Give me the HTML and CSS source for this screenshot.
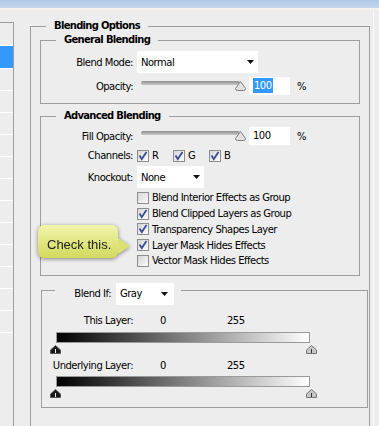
FILE: index.html
```html
<!DOCTYPE html>
<html lang="en">
<head>
    <meta charset="UTF-8" />
    <title>Layer Style - Blending Options</title>
    <link rel="stylesheet" href="styles.css">
</head>
<body>

<div class="titlebar"></div>

<div class="window">
    <div class="sidebar">
        <div class="side-row first"></div>
        <div class="side-row selected"></div>
        <div class="side-row"></div>
        <div class="side-row"></div>
        <div class="side-row"></div>
        <div class="side-row"></div>
        <div class="side-row"></div>
        <div class="side-row"></div>
        <div class="side-row"></div>
        <div class="side-row"></div>
        <div class="side-row"></div>
        <div class="side-row"></div>
        <div class="side-row"></div>
        <div class="side-row"></div>
    </div>

    <div class="main">
        <fieldset class="group outer">
            <legend>Blending Options</legend>

            <fieldset class="group general">
                <legend>General Blending</legend>
                <div class="row row-select">
                    <span class="lbl">Blend Mode:</span>
                    <div class="select select-wide">
                        <span>Normal</span>
                        <svg class="arrow" width="7" height="4" viewBox="0 0 7 4"><polygon points="0,0 7,0 3.5,4" /></svg>
                    </div>
                </div>
                <div class="row row-num">
                    <span class="lbl">Opacity:</span>
                    <div class="slider">
                        <div class="track"></div>
                        <svg class="thumb" width="11" height="11" viewBox="0 0 11 11"><path d="M5.5 0.5 L10.5 7.5 Q10.5 9.5 8.5 9.5 H2.5 Q0.5 9.5 0.5 7.5 Z" /></svg>
                    </div>
                    <div class="num"><span class="hl">100</span></div>
                    <span class="pct">%</span>
                </div>
            </fieldset>

            <fieldset class="group advanced">
                <legend>Advanced Blending</legend>
                <div class="row row-num">
                    <span class="lbl">Fill Opacity:</span>
                    <div class="slider">
                        <div class="track"></div>
                        <svg class="thumb" width="11" height="11" viewBox="0 0 11 11"><path d="M5.5 0.5 L10.5 7.5 Q10.5 9.5 8.5 9.5 H2.5 Q0.5 9.5 0.5 7.5 Z" /></svg>
                    </div>
                    <div class="num">100</div>
                    <span class="pct">%</span>
                </div>
                <div class="row row-channels">
                    <span class="lbl">Channels:</span>
                    <span class="ch"><span class="cb on"><svg width="10" height="10" viewBox="0 0 10 10"><path d="M1.5 4.5 L3.8 8 L8.5 1" /></svg></span>R</span>
                    <span class="ch"><span class="cb on"><svg width="10" height="10" viewBox="0 0 10 10"><path d="M1.5 4.5 L3.8 8 L8.5 1" /></svg></span>G</span>
                    <span class="ch"><span class="cb on"><svg width="10" height="10" viewBox="0 0 10 10"><path d="M1.5 4.5 L3.8 8 L8.5 1" /></svg></span>B</span>
                </div>
                <div class="row row-select">
                    <span class="lbl">Knockout:</span>
                    <div class="select select-knock">
                        <span>None</span>
                        <svg class="arrow" width="7" height="4" viewBox="0 0 7 4"><polygon points="0,0 7,0 3.5,4" /></svg>
                    </div>
                </div>
                <div class="checks">
                    <div class="check-row"><span class="cb"></span>Blend Interior Effects as Group</div>
                    <div class="check-row"><span class="cb on"><svg width="10" height="10" viewBox="0 0 10 10"><path d="M1.5 4.5 L3.8 8 L8.5 1" /></svg></span>Blend Clipped Layers as Group</div>
                    <div class="check-row"><span class="cb on"><svg width="10" height="10" viewBox="0 0 10 10"><path d="M1.5 4.5 L3.8 8 L8.5 1" /></svg></span>Transparency Shapes Layer</div>
                    <div class="check-row"><span class="cb on"><svg width="10" height="10" viewBox="0 0 10 10"><path d="M1.5 4.5 L3.8 8 L8.5 1" /></svg></span>Layer Mask Hides Effects</div>
                    <div class="check-row"><span class="cb"></span>Vector Mask Hides Effects</div>
                </div>
            </fieldset>

            <fieldset class="group blendif">
                <legend>
                    <span class="if-wrap">
                        <span class="if-lbl">Blend If:</span>
                        <span class="select select-gray">
                            <span>Gray</span>
                            <svg class="arrow" width="7" height="4" viewBox="0 0 7 4"><polygon points="0,0 7,0 3.5,4" /></svg>
                        </span>
                    </span>
                </legend>

                <div class="val-row">
                    <span class="val-lbl">This Layer:</span>
                    <span class="val-lo">0</span>
                    <span>255</span>
                </div>
                <div class="bar"></div>
                <div class="stops">
                    <svg class="stop dark" width="11" height="9" viewBox="0 0 11 9"><path d="M0.5 8.5 V5 L5.5 0.5 L10.5 5 V8.5 Z" /><line x1="5.5" y1="4" x2="5.5" y2="8" /></svg>
                    <svg class="stop light" width="11" height="9" viewBox="0 0 11 9"><path d="M0.5 8.5 V5 L5.5 0.5 L10.5 5 V8.5 Z" /><line x1="5.5" y1="4" x2="5.5" y2="8" /></svg>
                </div>

                <div class="val-row second">
                    <span class="val-lbl">Underlying Layer:</span>
                    <span class="val-lo">0</span>
                    <span>255</span>
                </div>
                <div class="bar"></div>
                <div class="stops">
                    <svg class="stop dark" width="11" height="9" viewBox="0 0 11 9"><path d="M0.5 8.5 V5 L5.5 0.5 L10.5 5 V8.5 Z" /><line x1="5.5" y1="4" x2="5.5" y2="8" /></svg>
                    <svg class="stop light" width="11" height="9" viewBox="0 0 11 9"><path d="M0.5 8.5 V5 L5.5 0.5 L10.5 5 V8.5 Z" /><line x1="5.5" y1="4" x2="5.5" y2="8" /></svg>
                </div>
            </fieldset>
        </fieldset>
    </div>
</div>

<div class="callout">Check this.</div>

</body>
</html>
```

FILE: styles.css
```css
body {
    margin: 0;
    height: 426px;
    overflow: hidden;
    position: relative;
    background-color: #ededed;
    font-family: "DejaVu Sans", sans-serif;
    font-size: 10px;
    letter-spacing: -0.5px;
    color: #000;
}

.titlebar {
    height: 8px;
    background: linear-gradient(#b2c9e6, #c4d6ed);
    border-bottom: 2px solid #f4f1ef;
}

.window {
    display: flex;
    height: 416px;
}

/* list of styles on the left */
.sidebar {
    width: 13px;
    margin-top: 12px;
    border-top: 1px solid #9c9c9c;
    border-right: 1px solid #9c9c9c;
}

.side-row {
    height: 21px;
    border-bottom: 1px solid #fff;
}

.side-row.first {
    height: 22px;
}

.side-row.selected {
    height: 22px;
    background-color: #3399ff;
}

.main {
    box-sizing: border-box;
    width: 360px;
    padding: 9px 0 0 16px;
    border-right: 1px solid #f9f9f9;
}

fieldset.group {
    margin: 0;
    padding: 0;
    min-width: 0;
    border: 1px solid #9d9d9d;
}

fieldset.group legend {
    padding: 0 8px;
    line-height: 14px;
    font-weight: bold;
    letter-spacing: -0.7px;
}

/* runs off the bottom of the window, so no bottom edge */
.outer {
    box-sizing: border-box;
    width: 340px;
    height: 407px;
    padding: 0 9px !important;
    border-bottom: none !important;
}

.outer > legend {
    margin-left: 6px;
}

.general > legend,
.advanced > legend {
    margin-left: 15px;
}

.general {
    padding: 4px 0 8px 0 !important;
}

.advanced {
    margin-top: 5px !important;
    padding: 4px 0 6px 0 !important;
}

.row {
    display: flex;
    align-items: center;
}

.lbl {
    flex: none;
    width: 92px;
    margin-right: 4px;
    text-align: right;
}

.row-select {
    height: 22px;
}

.general .row-num {
    margin-top: 4px;
}

.row-num {
    height: 18px;
}

.row-channels {
    height: 21px;
}

.select {
    box-sizing: border-box;
    display: flex;
    align-items: center;
    justify-content: space-between;
    height: 22px;
    padding: 0 4px;
    background-color: #fff;
}

.select-wide {
    width: 121px;
}

.select-knock {
    width: 67px;
}

.select-gray {
    width: 58px;
    padding-right: 6px;
}

.arrow {
    fill: #111;
}

.slider {
    position: relative;
    width: 110px;
    height: 18px;
    margin-right: 2px;
}

.track {
    width: 99px;
    height: 4px;
    margin: 4px 0 0 4px;
    border-radius: 2px;
    background: linear-gradient(#8e8e8e, #c9c9c9);
}

.thumb {
    position: absolute;
    left: 98px;
    top: 4px;
    fill: #e2e2e2;
    stroke: #7d7d7d;
    stroke-width: 1;
}

.num {
    box-sizing: border-box;
    width: 41px;
    height: 18px;
    line-height: 18px;
    padding-left: 4px;
    background-color: #fff;
}

.hl {
    padding: 2px 1px;
    background-color: #3399ff;
    color: #fff;
}

.pct {
    margin-left: 7px;
}

.ch {
    display: flex;
    align-items: center;
    width: 36px;
}

.cb {
    box-sizing: border-box;
    display: inline-flex;
    align-items: center;
    justify-content: center;
    width: 12px;
    height: 12px;
    margin-right: 3px;
    border: 1px solid #8d8e8f;
    background: linear-gradient(135deg, #d6d6d6, #fbfbfb);
    flex: none;
}

.cb svg {
    fill: none;
    stroke: #3c4c94;
    stroke-width: 1.8;
}

.checks {
    margin-top: 2px;
}

.check-row {
    display: flex;
    align-items: center;
    height: 15.75px;
    padding-left: 96px;
}

/* blend if */
.blendif {
    width: 316px;
    margin: 1px 0 0 1px !important;
    padding: 0 0 9px 9px !important;
}

.blendif > legend {
    margin-left: 4px;
    padding: 6px 7px 0 4px !important;
    font-weight: normal !important;
    letter-spacing: -0.5px !important;
}

.if-wrap {
    display: flex;
    align-items: center;
}

.if-lbl {
    width: 52px;
    margin-right: 5px;
    text-align: right;
}

.val-row {
    display: flex;
    align-items: center;
    height: 16px;
    margin-top: 8px;
}

.val-row.second {
    margin-top: 4px;
}

.val-lbl {
    width: 82px;
    text-align: right;
}

.val-lo {
    width: 67px;
    margin-left: 27px;
}

.bar {
    box-sizing: border-box;
    width: 254px;
    height: 11px;
    margin: 3px 0 0 5px;
    border: 1px solid #9a9a9a;
    background: linear-gradient(to right, #000, #fff);
}

.val-row.second + .bar {
    margin-top: 2px;
}

.stops {
    display: flex;
    justify-content: space-between;
    width: 267px;
    height: 9px;
    margin: 2px 0 0 -1px;
}

.stop.dark {
    fill: #1a1a1a;
    stroke: #555;
}

.stop.dark line {
    stroke: #eee;
}

.stop.light {
    fill: #c8c8c8;
    stroke: #777;
}

.stop.light line {
    stroke: #333;
}

/* yellow note */
.callout {
    position: absolute;
    left: 38px;
    top: 225px;
    box-sizing: border-box;
    width: 80px;
    height: 33px;
    padding: 12px 0 0 9px;
    line-height: 15px;
    border-radius: 6px;
    background: linear-gradient(#f1f5aa, #d3d95e);
    font-family: "Liberation Sans", Arial, sans-serif;
    font-size: 13px;
    letter-spacing: 0;
    color: #222;
    filter: drop-shadow(0 1px 2px rgba(0, 0, 0, 0.45));
}

.callout::after {
    content: "";
    position: absolute;
    left: 80px;
    top: 13px;
    border-left: 12px solid #dce170;
    border-top: 8px solid transparent;
    border-bottom: 8px solid transparent;
}
```
